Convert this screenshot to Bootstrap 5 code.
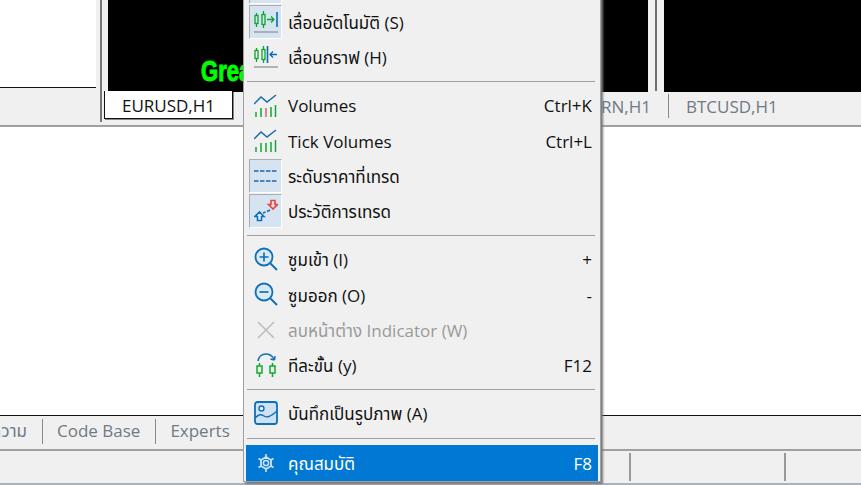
<!DOCTYPE html>
<html>
<head>
  <meta charset="utf-8">
  <title>Chart menu</title>
  <link href="https://cdn.jsdelivr.net/npm/bootstrap@5.3.2/dist/css/bootstrap.min.css" rel="stylesheet">
  <style>
    body { width: 861px; height: 485px; overflow: hidden; background: #f0f0f0; font-family: "Open Sans", "Noto Sans", "Noto Sans Thai", "Liberation Sans", sans-serif; font-size: 17px; color: #111; position: relative; }
    .charts { height: 92px; }
    .list-pane { width: 96px; height: 88px; background: #fff; border-bottom: 1px solid #111; overflow: hidden; }
    .list-pane span { display: block; margin-top: -19px; padding-left: 28px; color: #777; white-space: nowrap; }
    .pane-rule { width: 2px; margin-left: 4px; background: #777; }
    .chart-a { margin-left: 6px; width: 540px; background: #000; overflow: hidden; padding: 57px 0 0 93px; white-space: nowrap; }
    .great { display: inline-block; color: #00ff00; font: bold 29px/1 "Liberation Sans", sans-serif; -webkit-text-stroke: 1px #00ff00; transform: scaleX(.76); transform-origin: left center; }
    .chart-gap { width: 16px; height: 91px; display: flex; justify-content: center; }
    .chart-gap i { width: 2px; background: #6d6d6d; }
    .chart-b { flex: 1; background: #000; }
    .tabstrip { height: 35px; border-bottom: 2px solid #a0a0a0; color: #6f7a85; }
    .tab-rule { width: 1px; height: 24px; margin-top: 2px; background: #8a8a8a; }
    .tab-start { width: 2px; height: 30px; margin-left: 100px; background: #777; }
    .tab-on { width: 129px; height: 28px; margin-top: -1px; margin-left: 2px; padding-top: 2px; background: #fff; border: 1px solid #111; border-top: 0; color: #111; box-shadow: 1px 1px 0 #888; }
    .tab-rn { margin-left: 366px; width: 52px; text-align: right; line-height: 30px; }
    .tab-btc { margin-left: 17px; line-height: 30px; white-space: nowrap; }
    .tab-gap { margin-left: 17px; }
    .sheet { height: 289px; background: #fff; border-bottom: 1px solid #111; }
    .bottom-tabs { height: 35px; border-bottom: 2px solid #a0a0a0; color: #6f7a85; }
    .bottom-tabs span { white-space: nowrap; margin: -4px 15px 0 14px; }
    .bottom-tabs .first-tab { width: 42px; margin: -4px 15px 0 -15px; text-align: right; flex: none; }
    .bottom-tabs .last-tab { margin-right: 13px; }
    .tab-rule-s { width: 1px; height: 25px; margin-top: -2px; background: #8a8a8a; flex: none; }
    .status { height: 32px; padding-top: 2px; }
    .status i { width: 2px; height: 28px; background: #999; }
    .edge { height: 2px; background: #aab2bd; }
    .ctx { position: absolute; left: 243px; top: -7px; width: 358px; height: 489px; background: #f0f0f0; border: 1px solid #a0a0a0; box-shadow: 2px 2px 2px #777; padding: 10.6px 2px 0 2px; }
    .ctx-row { height: 35.25px; display: flex; align-items: center; padding-right: 6px; white-space: nowrap; }
    .ctx-row > span { position: relative; top: .5px; }
    .ctx-row .ico { width: 33px; height: 34px; margin: -1px 6px 0 3px; display: flex; align-items: center; justify-content: center; border: 1px solid transparent; flex: none; }
    .ctx-row .ico.on { background: #d6e4f2; border-color: #a9aeb5 #fff #fff #a9aeb5; }
    .ctx-row .keys { margin-left: auto; }
    .ctx-rule { height: 1px; background: #a0a0a0; margin: 6px 3px 6px 1px; }
    .ctx-rule.low { margin-top: 6.8px; }
    .off { color: #9a9a9a; }
    .hot { background: #0078d4; color: #fff; height: 36px; }
    .top-stub { position: absolute; left: 5px; top: 0; width: 33px; height: 10px; background: #d6e4f2; border: 1px solid #fff; border-left-color: #a9aeb5; }
  </style>
</head>
<body>
  <div class="charts d-flex">
    <div class="list-pane"><span>11 / 100</span></div>
    <div class="pane-rule"></div>
    <div class="chart-a"><span class="great">Great</span></div>
    <div class="chart-gap"><i></i></div>
    <div class="chart-b"></div>
  </div>
  <div class="tabstrip d-flex align-items-start">
    <div class="tab-start"></div>
    <div class="tab-on d-flex align-items-center justify-content-center">EURUSD,H1</div>
    <div class="tab-rn">RN,H1</div>
    <div class="tab-rule tab-gap"></div>
    <div class="tab-btc">BTCUSD,H1</div>
  </div>
  <div class="sheet"></div>
  <div class="bottom-tabs d-flex align-items-center">
    <span class="first-tab">ความ</span>
    <div class="tab-rule-s"></div>
    <span>Code Base</span>
    <div class="tab-rule-s"></div>
    <span class="last-tab">Experts</span>
    <div class="tab-rule-s"></div>
  </div>
  <div class="status d-flex"><i style="margin-left:629px"></i><i style="margin-left:153px"></i></div>
  <div class="edge"></div>

  <div class="ctx">
    <div class="top-stub"></div>
    <div class="ctx-row">
      <div class="ico on"><svg width="24" height="22" viewBox="0 0 24 22" fill="none"><g stroke="#0aa52a" stroke-width="1.3"><path d="M2.500 2v14M9.500 0v17"/><rect x="1" y="4.500" width="3" height="8" fill="#d6e4f2"/><rect x="8" y="3.500" width="3" height="10" fill="#d6e4f2"/></g><path d="M13 8.500h6M17 5.500l3 3-3 3" stroke="#0aa52a" stroke-width="1.300"/><path d="M23 1v15" stroke="#0a6cb3" stroke-width="1.600"/><path d="M0 21h24" stroke="#999" stroke-width="1.400"/></svg></div>
      <span>เลื่อนอัตโนมัติ (S)</span>
    </div>
    <div class="ctx-row">
      <div class="ico"><svg width="24" height="22" viewBox="0 0 24 22" fill="none"><g stroke="#0aa52a" stroke-width="1.3"><path d="M2.500 2v14M9.500 0v17"/><rect x="1" y="4.500" width="3" height="8" fill="#f0f0f0"/><rect x="8" y="3.500" width="3" height="10" fill="#f0f0f0"/></g><path d="M13.500 0v17" stroke="#0a6cb3" stroke-width="1.600"/><path d="M23 8.500h-7M19 5.500l-3 3 3 3" stroke="#0a6cb3" stroke-width="1.300"/><path d="M0 21h24" stroke="#999" stroke-width="1.400"/></svg></div>
      <span>เลื่อนกราฟ (H)</span>
    </div>
    <div class="ctx-rule"></div>
    <div class="ctx-row">
      <div class="ico"><svg width="23" height="23" viewBox="0 0 23 23" fill="none"><path d="M0 10l7-7 6 5 9-7" stroke="#1a6aa8" stroke-width="1.500"/><path d="M2 23v-5M7 23v-9M17 23v-10M21.500 23v-12" stroke="#12a832" stroke-width="1.500"/><path d="M12 23v-9" stroke="#e06060" stroke-width="1.500"/></svg></div>
      <span>Volumes</span><span class="keys">Ctrl+K</span>
    </div>
    <div class="ctx-row">
      <div class="ico"><svg width="23" height="23" viewBox="0 0 23 23" fill="none"><path d="M0 10l7-7 6 5 9-7" stroke="#1a6aa8" stroke-width="1.500"/><path d="M2 23v-5M7 23v-9M12 23v-9M17 23v-10M21.500 23v-12" stroke="#12a832" stroke-width="1.500"/></svg></div>
      <span>Tick Volumes</span><span class="keys">Ctrl+L</span>
    </div>
    <div class="ctx-row">
      <div class="ico on"><svg width="23" height="14" viewBox="0 0 23 14" fill="none"><path d="M0 2h23M0 12h23" stroke="#1a6aa8" stroke-width="1.500" stroke-dasharray="4.500 1.500"/></svg></div>
      <span>ระดับราคาที่เทรด</span>
    </div>
    <div class="ctx-row">
      <div class="ico on"><svg width="24" height="24" viewBox="0 0 24 24" fill="none"><path d="M9 14l2.500-1M13 12.500l3-1.500" stroke="#1a6aa8" stroke-width="1.500"/><path d="M5.500 13l4.500 4.500h-2.500v4h-4v-4h-2.500z" fill="#e6f0f8" stroke="#0f70b7" stroke-width="1.600"/><path d="M19 10l-4.500-4.500h2.500v-4h4v4h2.500z" fill="#f8dcdc" stroke="#e04848" stroke-width="1.600"/></svg></div>
      <span>ประวัติการเทรด</span>
    </div>
    <div class="ctx-rule"></div>
    <div class="ctx-row">
      <div class="ico"><svg width="24" height="24" viewBox="0 0 24 24" fill="none"><circle cx="10" cy="10" r="8.500" stroke="#0f70b7" stroke-width="1.800" fill="#dbe9f5"/><path d="M5.500 10h9M10 5.500v9" stroke="#0f70b7" stroke-width="1.700"/><path d="M16.500 16.500L23 23" stroke="#0f70b7" stroke-width="2"/></svg></div>
      <span>ซูมเข้า (I)</span><span class="keys">+</span>
    </div>
    <div class="ctx-row">
      <div class="ico"><svg width="24" height="24" viewBox="0 0 24 24" fill="none"><circle cx="10" cy="10" r="8.500" stroke="#0f70b7" stroke-width="1.800" fill="#dbe9f5"/><path d="M5.500 10h9" stroke="#0f70b7" stroke-width="1.700"/><path d="M16.500 16.500L23 23" stroke="#0f70b7" stroke-width="2"/></svg></div>
      <span>ซูมออก (O)</span><span class="keys">-</span>
    </div>
    <div class="ctx-row">
      <div class="ico"><svg width="18" height="18" viewBox="0 0 18 18" fill="none"><path d="M1 1l16 16M17 1L1 17" stroke="#bdbdbd" stroke-width="1.600"/></svg></div>
      <span class="off">ลบหน้าต่าง Indicator (W)</span>
    </div>
    <div class="ctx-row">
      <div class="ico"><svg width="22" height="24" viewBox="0 0 22 24" fill="none"><path d="M3 8c1-5 4-7 8-7s6 1.500 8 5M19.500 7l.5-4M19.500 7l-4-1" stroke="#0f70b7" stroke-width="1.500"/><path d="M4.500 10v14M17.500 10v14" stroke="#12a832" stroke-width="1.500"/><rect x="2" y="13" width="5" height="7" fill="#f0f0f0" stroke="#12a832" stroke-width="1.500"/><rect x="15" y="13" width="5" height="7" fill="#f0f0f0" stroke="#12a832" stroke-width="1.500"/></svg></div>
      <span>ทีละขั้น (y)</span><span class="keys">F12</span>
    </div>
    <div class="ctx-rule"></div>
    <div class="ctx-row">
      <div class="ico"><svg width="24" height="24" viewBox="0 0 24 24" fill="none"><rect x="1" y="1" width="22" height="22" rx="2.500" stroke="#0f70b7" stroke-width="1.800" fill="#cfe2f3"/><circle cx="7.500" cy="7.500" r="2.500" stroke="#0f70b7" stroke-width="1.400" fill="#f0f0f0"/><path d="M1 17c4-4 6-4 9-2s6 1 13-5" stroke="#0f70b7" stroke-width="1.400"/></svg></div>
      <span>บันทึกเป็นรูปภาพ (A)</span>
    </div>
    <div class="ctx-rule low"></div>
    <div class="ctx-row hot">
      <div class="ico"><svg width="16" height="18" viewBox="0 0 16 18" fill="none"><path d="M8 3l5 3v6l-5 3-5-3v-6z" stroke="#cfe3f5" stroke-width="1.800" stroke-linejoin="round"/><circle cx="8" cy="9" r="2.600" stroke="#cfe3f5" stroke-width="1.500"/><path d="M8 0v3M8 15v3M.5 4.500l2.500 1.500M15.500 4.500l-2.500 1.500M.5 13.500l2.500-1.500M15.500 13.500l-2.500-1.500" stroke="#cfe3f5" stroke-width="1.600"/></svg></div>
      <span>คุณสมบัติ</span><span class="keys">F8</span>
    </div>
  </div>
</body>
</html>
